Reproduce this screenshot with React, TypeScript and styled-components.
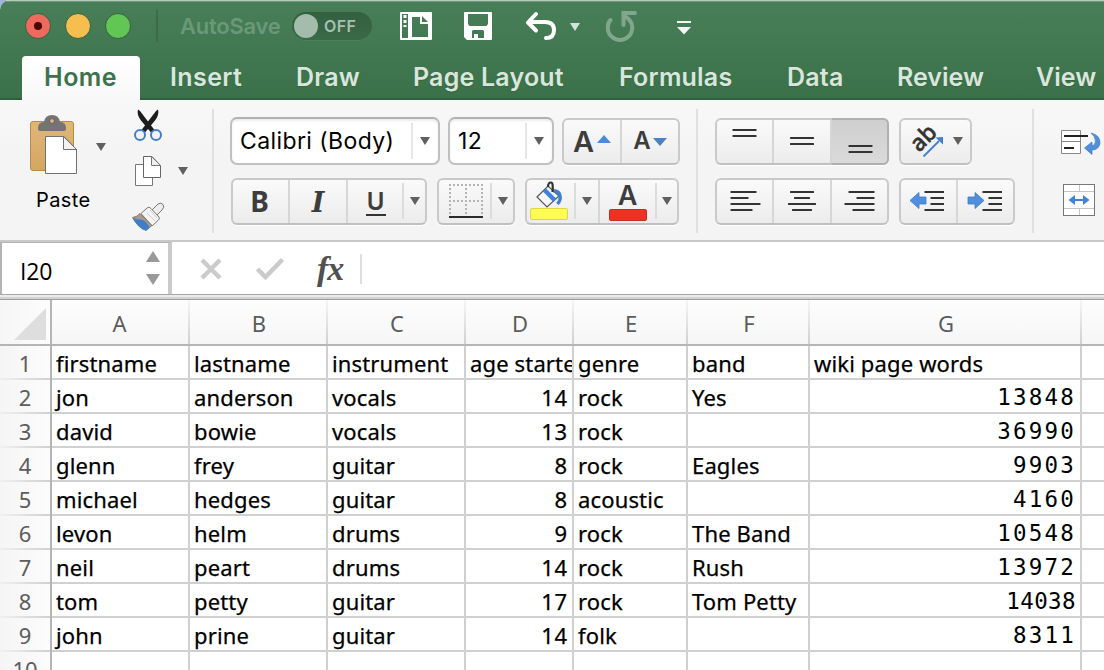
import React from "react";
import styled, { createGlobalStyle, css } from "styled-components";

const GlobalStyle = createGlobalStyle`
  * { box-sizing: border-box; }
  html, body { margin: 0; padding: 0; overflow: hidden; background: #9fb4d6; }
  svg { display: block; flex: none; overflow: visible; }
`;

const ui = `Inter, "Liberation Sans", sans-serif`;
const sheet = `"Noto Sans", "Open Sans", sans-serif`;

const Window = styled.div`
  width: 1104px;
  height: 670px;
  overflow: hidden;
  display: flex;
  flex-direction: column;
  border-top-left-radius: 10px;
  background: #fff;
  font-family: ${ui};
`;

/* ---------- title bar and tabs ---------- */

const Header = styled.header`
  flex: none;
  height: 100px;
  display: flex;
  flex-direction: column;
  justify-content: space-between;
  background: linear-gradient(#497f58, #3a7149);
  border-top: 1px solid #b5cabb;
  box-shadow: inset 0 1px 0 #6d977a, inset 0 -2px 0 #2f6140;
`;

const TitleBar = styled.div`
  height: 50px;
  display: flex;
  align-items: center;
  padding-left: 25px;
`;

const Light = styled.i<{ $c: string }>`
  width: 26px;
  height: 26px;
  margin-right: 14px;
  border-radius: 50%;
  border: 1.5px solid #35633f;
  background: ${(p) => p.$c};
  display: flex;
  align-items: center;
  justify-content: center;
`;

const LightDot = styled.b`
  width: 8px;
  height: 8px;
  border-radius: 50%;
  background: #4a0500;
`;

const TitleRule = styled.i`
  width: 2px;
  height: 32px;
  margin: 0 22px 0 11px;
  background: #3b6b49;
`;

const AutoSave = styled.span`
  width: 112px;
  font-size: 22px;
  font-weight: 600;
  letter-spacing: -0.25px;
  color: #6b987a;
  white-space: nowrap;
`;

const Toggle = styled.div`
  width: 80px;
  height: 28px;
  border-radius: 14px;
  background: linear-gradient(#33603f, #3b6a49);
  box-shadow: 0 1px 0 #56886480;
  display: flex;
  align-items: center;
  padding-left: 2px;
  font-size: 16px;
  font-weight: 600;
  letter-spacing: 0.4px;
  color: #a9c0b1;
`;

const Knob = styled.i`
  width: 24px;
  height: 24px;
  margin-right: 6px;
  border-radius: 50%;
  background: #a3bcab;
`;

const QuickTools = styled.div`
  display: flex;
  align-items: center;
  gap: 32px;
  margin-left: 28px;
`;

const Tabs = styled.nav`
  height: 44px;
  display: flex;
  padding-left: 22px;
`;

const Tab = styled.a<{ $w: number; $ls?: number; $active?: boolean }>`
  flex: none;
  width: ${(p) => p.$w}px;
  line-height: 43px;
  font-size: 25px;
  font-weight: 600;
  letter-spacing: ${(p) => p.$ls ?? 0}px;
  color: #dae6dd;
  text-shadow: 0 1px 1px #2c5c3b80;
  white-space: nowrap;
  ${(p) =>
    p.$active &&
    css`
      margin-right: 30px;
      padding-left: 22px;
      border-radius: 4px 4px 0 0;
      background: linear-gradient(#fff, #f8f8f8);
      color: #3c734c;
      text-shadow: none;
    `}
`;

/* ---------- ribbon ---------- */

const Ribbon = styled.section`
  flex: none;
  height: 142px;
  display: flex;
  align-items: flex-start;
  background: linear-gradient(#f8f8f8, #f4f4f4 40%, #f4f4f4);
  border-bottom: 2px solid #c9c9c9;
`;

const RibbonRule = styled.i`
  flex: none;
  width: 2px;
  height: 124px;
  margin-top: 9px;
  background: #e0e0e0;
`;

const Clipboard = styled.div`
  flex: none;
  width: 212px;
  display: flex;
  padding: 9px 0 0 28px;
`;

const PasteButton = styled.div`
  width: 68px;
  padding-top: 5px;
  font-size: 20px;
  line-height: 26px;
  letter-spacing: 0.4px;
  color: #000;
  svg { margin-bottom: 13px; }
  span { padding-left: 8px; }
`;

const PasteArrow = styled.div`
  width: 36px;
  padding-top: 34px;
`;

const ClipTools = styled.div`
  width: 46px;
  display: flex;
  flex-direction: column;
  align-items: flex-start;
  gap: 14px;
`;

const CopyArrow = styled.div`
  padding-top: 58px;
`;

const Group = styled.div<{ $w: number; $left: number }>`
  flex: none;
  width: ${(p) => p.$w}px;
  padding: 17px 0 0 ${(p) => p.$left}px;
  display: flex;
  flex-direction: column;
  gap: 12px;
`;

const Row = styled.div<{ $inset?: number }>`
  height: 48px;
  display: flex;
  align-items: flex-start;
  padding-left: ${(p) => p.$inset ?? 0}px;
`;

const Combo = styled.div<{ $w: number; $ls?: number }>`
  width: ${(p) => p.$w}px;
  height: 48px;
  margin-right: 8px;
  display: flex;
  align-items: center;
  padding-left: 8px;
  border: 2px solid #c0c0c0;
  border-top-color: #b2b2b2;
  border-radius: 7px;
  background: #fff;
  box-shadow: inset 0 2px 2px #ececec;
  font-size: 23px;
  letter-spacing: ${(p) => p.$ls ?? 0}px;
  white-space: nowrap;
  color: #000;
`;

const ComboArrow = styled.div`
  margin-left: auto;
  width: 27px;
  height: 36px;
  display: flex;
  align-items: center;
  padding-left: 7px;
  border-left: 2px solid #e6e6e6;
`;

const Buttons = styled.div`
  height: 47px;
  margin: 0.5px 10px 0 0;
  display: flex;
  align-items: stretch;
  border: 2px solid #cacaca;
  border-bottom-color: #c0c0c0;
  border-radius: 6px;
  background: linear-gradient(#fafafa, #ececec);
  box-shadow: 0 1px 0 #fff;
`;

const Button = styled.button<{ $w: number; $rule?: boolean; $pressed?: boolean; $gap?: number; $end?: number }>`
  width: ${(p) => p.$w}px;
  padding: 0 ${(p) => p.$end ?? 0}px 0 0;
  border: 0;
  border-right: ${(p) => (p.$rule ? "2px solid #d6d6d6" : "0")};
  background: none;
  display: flex;
  align-items: center;
  justify-content: center;
  gap: ${(p) => p.$gap ?? 0}px;
  ${(p) =>
    p.$pressed &&
    css`
      margin: -2px -2px -2px 0;
      width: ${p.$w + 2}px;
      border: 2px solid #b0b0b0;
      border-left: 0;
      border-radius: 0 6px 6px 0;
      background: linear-gradient(#cfcfcf, #dadada);
    `}
`;

const Drop = styled.div<{ $w: number; $rule?: boolean }>`
  width: ${(p) => p.$w}px;
  display: flex;
  align-items: center;
  border-right: ${(p) => (p.$rule ? "2px solid #d6d6d6" : "0")};
  &::before {
    content: "";
    width: 2px;
    height: 36px;
    margin-right: auto;
    background: #dcdcdc;
  }
  svg { margin-right: auto; }
`;

const Glyph = styled.span<{ $size: number; $bold?: boolean; $family?: string }>`
  font-family: ${(p) => p.$family ?? ui};
  font-size: ${(p) => p.$size}px;
  line-height: 1;
  font-weight: ${(p) => (p.$bold ? 700 : 600)};
  color: #3d3d3d;
`;

const ItalicGlyph = styled(Glyph)`
  margin-top: 3px;
  font-style: italic;
`;

const Underlined = styled(Glyph)`
  width: 20px;
  margin: 3px 0 0 1px;
  text-align: center;
  border-bottom: 2px solid #333;
`;

const Caret = styled.span<{ $lift: number }>`
  margin-bottom: ${(p) => p.$lift}px;
`;

const Swatched = styled.div<{ $c: string; $edge: string; $lift: number }>`
  width: 36px;
  height: 36px;
  display: flex;
  flex-direction: column;
  align-items: center;
  justify-content: space-between;
  > * { margin-top: -${(p) => p.$lift}px; }
  &::after {
    content: "";
    width: 36px;
    height: 10px;
    flex: none;
    margin-bottom: 1px;
    border: 1px solid ${(p) => p.$edge};
    border-radius: 2px;
    background: ${(p) => p.$c};
  }
`;

const WrapTools = styled.div`
  padding: 30px 0 0 27px;
  display: flex;
  flex-direction: column;
  gap: 27px;
`;

/* ---------- formula bar ---------- */

const FormulaBar = styled.section`
  flex: none;
  height: 52px;
  display: flex;
  align-items: center;
  background: #fff;
`;

const NameBox = styled.div`
  width: 172px;
  height: 52px;
  display: flex;
  align-items: center;
  justify-content: space-between;
  padding: 4px 8px 0 18px;
  border: solid #b4b4b4;
  border-width: 1px 4px 0 2px;
  border-right-color: #cacaca;
  font-family: "Open Sans", sans-serif;
  font-size: 23px;
  letter-spacing: -0.1px;
  color: #000;
  svg { margin-bottom: 5px; }
`;

const FormulaTools = styled.div`
  display: flex;
  align-items: center;
  padding-top: 2px;
`;

const Fx = styled.span`
  width: 44px;
  margin-left: 33px;
  font: italic 700 34px/38px "Liberation Serif", serif;
  letter-spacing: -1px;
  color: #505050;
`;

const FormulaRule = styled.i`
  width: 2px;
  height: 30px;
  margin-left: -1px;
  background: #dedede;
`;

const Splitter = styled.div`
  flex: none;
  height: 6px;
  background: linear-gradient(#a8a8a8 1px, #ececec 1px 3px, #d2d2d2 3px 5px, #9c9c9c 5px);
`;

/* ---------- grid ---------- */

const Table = styled.div`
  display: grid;
  grid-template-columns: 52px 138px 138px 138px 108px 114px 122px 272px 60px;
  grid-template-rows: 46px;
  grid-auto-rows: 34px;
  font-family: ${sheet};
  font-size: 22px;
`;

const Corner = styled.div`
  display: flex;
  align-items: center;
  padding: 3px 0 0 14px;
  border: solid #b5b5b5;
  border-width: 0 2px 2px 0;
  background: linear-gradient(90deg, #f6f6f6, #fcfcfc);
`;

const ColHead = styled.div`
  padding: 2px 0 0 0;
  line-height: 42px;
  text-align: center;
  color: #5c5c5c;
  border-bottom: 2px solid #b5b5b5;
  background:
    linear-gradient(#f6f6f6, #d0d0d0) right / 2px 100% no-repeat,
    linear-gradient(#fdfdfd, #f6f6f6);
  ${Corner} + & { padding-right: 3px; }
`;

const RowHead = styled.div`
  padding-top: 2px;
  line-height: 31px;
  text-align: center;
  color: #5c5c5c;
  border-right: 2px solid #b5b5b5;
  background:
    linear-gradient(90deg, #f0f0f0, #d0d0d0) bottom / 100% 2px no-repeat,
    linear-gradient(90deg, #f5f5f5, #fcfcfc);
`;

const Cell = styled.div<{ $num?: boolean; $mono?: boolean; $ls: number }>`
  padding: 2px 4px 0 4px;
  line-height: 31px;
  overflow: hidden;
  white-space: nowrap;
  color: #000;
  -webkit-text-stroke: 0.25px #000;
  border: solid #d0d0d0;
  border-width: 0 2px 2px 0;
  text-align: ${(p) => (p.$num ? "right" : "left")};
  letter-spacing: ${(p) => p.$ls}px;
  ${(p) => p.$mono && css`font-family: "DejaVu Sans Mono", monospace; font-size: 22.5px; -webkit-text-stroke: 0;`}
`;

const Arrow = ({ w = 10, h = 8, up = false, fill = "#606060" }) => (
  <svg width={w} height={h} viewBox="0 0 10 8" preserveAspectRatio="none">
    <path d={up ? "M0 8L5 0L10 8Z" : "M0 0H10L5 8Z"} fill={fill} />
  </svg>
);

const Lines = ({ rows }: { rows: number[][] }) => (
  <svg width="32" height="36" viewBox="0 0 32 36">
    {rows.map(([x, y, w]) => (
      <rect key={y} x={x} y={y} width={w} height="2" rx=".5" fill="#333" />
    ))}
  </svg>
);

const PasteIcon = () => (
  <svg width="50" height="60" viewBox="28 114 50 60">
    <defs>
      <linearGradient id="board" x1="0" y1="0" x2="0" y2="1">
        <stop offset="0" stopColor="#dfb778" />
        <stop offset="1" stopColor="#d5a662" />
      </linearGradient>
    </defs>
    <rect x="30.5" y="121.5" width="43" height="49" rx="2.5" fill="url(#board)" stroke="#bd8a44" />
    <path d="M38 128q0-6 6-6q1-7 8-7t8 7q6 0 6 6v1q0 2-2 2H40q-2 0-2-2z" fill="#747474" />
    <circle cx="52" cy="121" r="2.4" fill="#dcb97f" stroke="#555" strokeWidth=".8" />
    <path d="M45.500 136.500H64L76.500 149.500V173.500H45.500Z" fill="#fff" stroke="#707070" />
    <path d="M63.500 136.500V149.500H76.500Z" fill="#f1f1f1" stroke="#707070" />
  </svg>
);

const CutIcon = () => (
  <svg width="32" height="33" viewBox="132 109 32 33">
    <path d="M138 109.500Q136.500 114.500 141 120.500L151 132.500L154.500 130L140 111Z" fill="#1c1c1c" />
    <path d="M158 109.500Q159.500 114.500 155 120.500L145 132.500L141.500 130L156 111Z" fill="#1c1c1c" />
    <circle cx="140" cy="135" r="5" fill="#f4f4f4" stroke="#3f7fd0" strokeWidth="2" />
    <circle cx="156" cy="135" r="5" fill="#f4f4f4" stroke="#3f7fd0" strokeWidth="2" />
  </svg>
);

const CopyIcon = () => (
  <svg width="30" height="32" viewBox="132 156 30 32">
    <path d="M135.500 164.500H152.500V185.500H135.500Z" fill="#fff" stroke="#777" />
    <path d="M143.500 156.500H152L160.500 165.500V177.500H143.500Z" fill="#fff" stroke="#666" />
    <path d="M151.500 156.500V165.500H160.500Z" fill="#eee" stroke="#777" />
  </svg>
);

const BrushIcon = () => (
  <svg width="34" height="30" viewBox="132 202 34 30">
    <path d="M151 211L158 204Q161 202 163 204.500Q165 207 162 210L156 216Z" fill="#eee" stroke="#777" />
    <path d="M141 213.500L147 208Q149 206 151 208.500L159 217Q160 219 158 220.500L152 226Z" fill="#f4f4f4" stroke="#777" />
    <path d="M140 213.500L152 225.500L146 230.500Q138 228 132.500 217.500Q137 217 140 213.500Z" fill="#a99c8c" stroke="#776b60" strokeWidth=".8" />
    <path d="M132.500 217.500Q137 220 141 219.500Q146 220 149.500 227.500L146 230.500Q138 228 132.500 217.500Z" fill="#3f7fc8" />
    <path d="M147 213L155 221M150 210L157 218" stroke="#ccc" strokeWidth="1" />
  </svg>
);

const BucketIcon = () => (
  <svg width="28" height="28" viewBox="534 180 28 28">
    <path d="M536 197L547 186L558 196L546 207Z" fill="#f6f6f6" stroke="#555" strokeWidth="1.200" />
    <path d="M543.500 190L554 200.500" stroke="#3f83dc" strokeWidth="4.500" />
    <path d="M552 191Q558 190 559 196Q560 200 556.500 204" fill="none" stroke="#3f7fd0" strokeWidth="3.400" />
    <path d="M547 187Q547 182.500 550 182.500Q552.500 182.500 551.500 192" fill="none" stroke="#333" strokeWidth="2.200" />
  </svg>
);

const BordersIcon = () => (
  <svg width="34" height="34" viewBox="-1 0 34 34">
    <path d="M0 1H34M0 17H34M1 0V31M17 0V31M33 0V31" fill="none" stroke="#b4b4b4" strokeWidth="2" strokeDasharray="2 2" />
    <path d="M0 33H34" stroke="#2a2a2a" strokeWidth="2" />
  </svg>
);

const IndentIcon = ({ right = false }) => (
  <svg width="34" height="22" viewBox="0 0 34 22">
    <path
      d={right ? "M0 7H7V2.500L16 10.500L7 18.500V14H0Z" : "M16 7H9V2.500L0 10.500L9 18.500V14H16Z"}
      fill="#4f8fde"
      stroke="#3f7bc6"
      strokeWidth=".8"
    />
    <path d="M14.500 2H34M20.500 8H34M20.500 14H34M14.500 20H34" stroke="#333" strokeWidth="2" />
  </svg>
);

const AngleIcon = () => (
  <svg width="36" height="36" viewBox="910 123 36 36">
    <text x="920" y="153" transform="rotate(-45 920 153)" fontFamily={sheet} fontSize="23" fontWeight="500" fill="#333" stroke="#333" strokeWidth=".5">
      ab
    </text>
    <path d="M924.500 156.500L940 141" stroke="#3f7fd0" strokeWidth="1.800" />
    <path d="M936.500 137.500L944 137V144.500Z" fill="#3f7fd0" />
  </svg>
);

const WrapIcon = () => (
  <svg width="40" height="27" viewBox="1061 130 40 27">
    <path d="M1061.500 130.500H1080.500V153.500H1061.500ZM1061.500 141.500H1080.500" fill="#fff" stroke="#888" />
    <path d="M1064 136H1088M1064 148H1074" stroke="#222" strokeWidth="1.800" />
    <path d="M1091 133Q1100 135 1100 143Q1099 150 1092 150V154.500L1084.500 148L1092 142V146Q1095.500 145 1095.500 141Q1095 136 1091 133Z" fill="#4f8fde" stroke="#3c78c2" strokeWidth=".7" />
  </svg>
);

const MergeIcon = () => (
  <svg width="34" height="32" viewBox="1061 184 34 32">
    <rect x="1063.500" y="184.500" width="31" height="31" fill="#fff" stroke="#777" />
    <path d="M1064 191.500H1094M1064 208.500H1094M1079.500 185V191M1079.500 209V215" stroke="#c4c4c4" />
    <path d="M1068.500 200L1075 195V199H1083V195L1089.500 200L1083 205V201H1075V205Z" fill="#4082d6" />
  </svg>
);

const GalleryIcon = () => (
  <svg width="32" height="28" viewBox="400 12 32 28">
    <path fillRule="evenodd" fill="#fff" d="M401 12H431Q432 12 432 13V39Q432 40 431 40H401Q400 40 400 39V13Q400 12 401 12ZM402 14V38H408V14ZM412 17V37H428V24H420V17ZM422 16V22H428Z" />
    <path d="M405 15V27" stroke="#fff" strokeWidth="3" strokeDasharray="3 2" />
  </svg>
);

const SaveIcon = () => (
  <svg width="28" height="28" viewBox="464 12 28 28">
    <path fillRule="evenodd" fill="#fff" d="M465 12H491Q492 12 492 13V39Q492 40 491 40H467L464 37V13Q464 12 465 12ZM468 14V24L469.500 26H486.500L488 24V14ZM472 31V38H474V34H478V38H484V31L483 30H473Z" />
  </svg>
);

const UndoIcon = () => (
  <svg width="56" height="28" viewBox="524 12 56 28">
    <path d="M536 14L528 22.500L536 30.500M529 22H545Q554 22 554 30Q554 38 546 38" fill="none" stroke="#fff" strokeWidth="4" strokeLinecap="round" strokeLinejoin="round" />
    <path d="M570 23H580L575 31Z" fill="#d5e2d9" />
  </svg>
);

const RedoIcon = () => (
  <svg width="30" height="28" viewBox="612 13 30 28">
    <path d="M610.500 21Q607.500 24 607.800 29A12.200 12.200 0 1 0 628.500 20L624 16.500M623.500 26V14H635" fill="none" stroke="#80a68c" strokeWidth="4" strokeLinecap="round" />
  </svg>
);

const MoreIcon = () => (
  <svg width="14" height="14" viewBox="674 19 14 14">
    <path d="M677 21H691V23H677ZM677 27H691L684 34.500Z" fill="#f2f6f3" />
  </svg>
);

const columns = ["A", "B", "C", "D", "E", "F", "G", ""];

const data: string[][] = [
  ["firstname", "lastname", "instrument", "age started", "genre", "band", "wiki page words", ""],
  ["jon", "anderson", "vocals", "14", "rock", "Yes", "13848", ""],
  ["david", "bowie", "vocals", "13", "rock", "", "36990", ""],
  ["glenn", "frey", "guitar", "8", "rock", "Eagles", "9903", ""],
  ["michael", "hedges", "guitar", "8", "acoustic", "", "4160", ""],
  ["levon", "helm", "drums", "9", "rock", "The Band", "10548", ""],
  ["neil", "peart", "drums", "14", "rock", "Rush", "13972", ""],
  ["tom", "petty", "guitar", "17", "rock", "Tom Petty", "14038", ""],
  ["john", "prine", "guitar", "14", "folk", "", "8311", ""],
  ["", "", "", "", "", "", "", ""],
];

const spacing = (value: string, mono: boolean, num: boolean) => {
  if (mono) return value === "14038" ? 0.4 : 2.2;
  return num ? 0.8 : 0.15;
};

export default function App() {
  return (
    <>
      <GlobalStyle />
      <Window>
        <Header>
          <TitleBar>
            <Light $c="#ee6a5f"><LightDot /></Light>
            <Light $c="#f5be4f" />
            <Light $c="#62c655" />
            <TitleRule />
            <AutoSave>AutoSave</AutoSave>
            <Toggle><Knob />OFF</Toggle>
            <QuickTools>
              <GalleryIcon />
              <SaveIcon />
              <UndoIcon />
              <RedoIcon />
              <MoreIcon />
            </QuickTools>
          </TitleBar>
          <Tabs>
            <Tab $w={118} $ls={0.5} $active>Home</Tab>
            <Tab $w={126} $ls={0.4}>Insert</Tab>
            <Tab $w={117} $ls={0.2}>Draw</Tab>
            <Tab $w={206} $ls={0.2}>Page Layout</Tab>
            <Tab $w={168} $ls={0.2}>Formulas</Tab>
            <Tab $w={110} $ls={0.2}>Data</Tab>
            <Tab $w={139}>Review</Tab>
            <Tab $w={68}>View</Tab>
          </Tabs>
        </Header>

        <Ribbon>
          <Clipboard>
            <PasteButton><PasteIcon /><span>Paste</span></PasteButton>
            <PasteArrow><Arrow /></PasteArrow>
            <ClipTools><CutIcon /><CopyIcon /><BrushIcon /></ClipTools>
            <CopyArrow><Arrow /></CopyArrow>
          </Clipboard>
          <RibbonRule />
          <Group $w={482} $left={16}>
            <Row>
              <Combo $w={210} $ls={0.4}>Calibri (Body)<ComboArrow><Arrow /></ComboArrow></Combo>
              <Combo $w={106} $ls={0.4}>12<ComboArrow><Arrow /></ComboArrow></Combo>
              <Buttons>
                <Button $w={58} $rule $gap={3}>
                  <Glyph $size={29}>A</Glyph>
                  <Caret $lift={4}><Arrow w={14} h={8} up fill="#4a8ade" /></Caret>
                </Button>
                <Button $w={56} $gap={2}>
                  <Glyph $size={24}>A</Glyph>
                  <Caret $lift={-2}><Arrow w={14} h={8} fill="#4a82c6" /></Caret>
                </Button>
              </Buttons>
            </Row>
            <Row $inset={1}>
              <Buttons>
                <Button $w={57} $rule $end={2}><Glyph $size={28} $bold $family={sheet}>B</Glyph></Button>
                <Button $w={58} $rule><ItalicGlyph $size={27} $bold $family='"DejaVu Serif", "Liberation Serif", serif'>I</ItalicGlyph></Button>
                <Button $w={54}><Underlined $size={24}>U</Underlined></Button>
                <Drop $w={23}><Arrow /></Drop>
              </Buttons>
              <Buttons>
                <Button $w={51}><BordersIcon /></Button>
                <Drop $w={23}><Arrow /></Drop>
              </Buttons>
              <Buttons>
                <Button $w={47} $end={4}>
                  <Swatched $c="#fdfb54" $edge="#dcd93e" $lift={3}><BucketIcon /></Swatched>
                </Button>
                <Drop $w={26} $rule><Arrow /></Drop>
                <Button $w={55}>
                  <Swatched $c="#eb3323" $edge="#cc2a1c" $lift={1}><Glyph $size={27}>A</Glyph></Swatched>
                </Button>
                <Drop $w={22}><Arrow /></Drop>
              </Buttons>
            </Row>
          </Group>
          <RibbonRule />
          <Group $w={334} $left={17}>
            <Row>
              <Buttons>
                <Button $w={57} $rule><Lines rows={[[3.5, 6, 24], [3.5, 12, 24]]} /></Button>
                <Button $w={58} $rule><Lines rows={[[4, 14, 24], [4, 20, 24]]} /></Button>
                <Button $w={55} $pressed><Lines rows={[[4.5, 22, 24], [4.5, 28, 24]]} /></Button>
              </Buttons>
              <Buttons>
                <Button $w={69} $gap={8}><AngleIcon /><Arrow /></Button>
              </Buttons>
            </Row>
            <Row>
              <Buttons>
                <Button $w={57} $rule><Lines rows={[[1.5, 8, 26], [1.5, 14, 18], [1.5, 20, 30], [1.5, 26, 22]]} /></Button>
                <Button $w={58} $rule><Lines rows={[[4, 8, 24], [8, 14, 16], [2, 20, 28], [6, 26, 20]]} /></Button>
                <Button $w={55}><Lines rows={[[4.5, 8, 26], [12.5, 14, 18], [0.5, 20, 30], [8.5, 26, 22]]} /></Button>
              </Buttons>
              <Buttons>
                <Button $w={57} $rule $end={3}><IndentIcon /></Button>
                <Button $w={55} $end={1}><IndentIcon right /></Button>
              </Buttons>
            </Row>
          </Group>
          <RibbonRule />
          <WrapTools><WrapIcon /><MergeIcon /></WrapTools>
        </Ribbon>

        <FormulaBar>
          <NameBox>
            I20
            <svg width="14" height="34" viewBox="0 0 14 34">
              <path d="M0 11L7 0L14 11ZM0 23H14L7 34Z" fill="#999" />
            </svg>
          </NameBox>
          <FormulaTools>
            <svg width="112" height="24" viewBox="172 257 112 24">
              <path d="M202 260L220 278M220 260L202 278" stroke="#cbcbcb" strokeWidth="4.500" />
              <path d="M257.500 269L265.500 277L282.500 259.500" fill="none" stroke="#cbcbcb" strokeWidth="4.500" />
            </svg>
            <Fx>fx</Fx>
            <FormulaRule />
          </FormulaTools>
        </FormulaBar>
        <Splitter />

        <Table>
          <Corner>
            <svg width="32" height="32" viewBox="0 0 32 32"><path d="M32 0V32H0Z" fill="#dedede" /></svg>
          </Corner>
          {columns.map((c, i) => <ColHead key={i}>{c}</ColHead>)}
          {data.map((row, r) => (
            <React.Fragment key={r}>
              <RowHead>{r + 1}</RowHead>
              {row.map((v, c) => {
                const num = r > 0 && (c === 3 || c === 6);
                const mono = num && c === 6;
                return (
                  <Cell key={c} $num={num} $mono={mono} $ls={spacing(v, mono, num)}>{v}</Cell>
                );
              })}
            </React.Fragment>
          ))}
        </Table>
      </Window>
    </>
  );
}
